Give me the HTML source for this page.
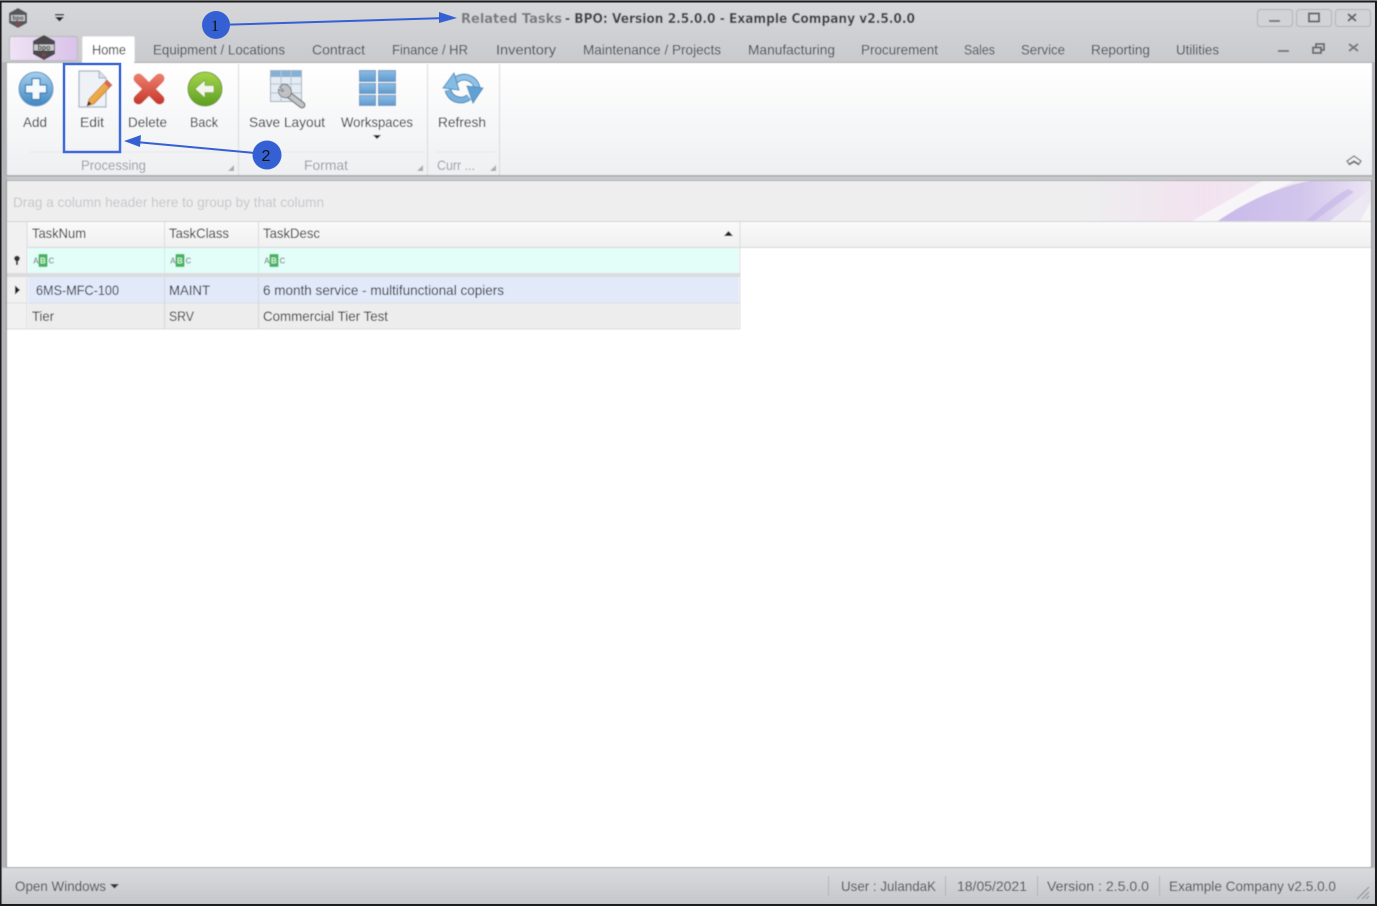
<!DOCTYPE html>
<html><head><meta charset="utf-8"><title>Related Tasks</title>
<style>
html,body{margin:0;padding:0;width:1377px;height:906px;overflow:hidden;background:#fff}
svg{display:block;position:absolute;left:0;top:0}
text{font-family:"Liberation Sans",sans-serif;font-size:14px;fill:#3a3f4a}
.t{fill:#464b56}
.g{fill:#9b9da2}
.k{fill:#262a32}
.sm{font-size:8px;font-weight:bold}
</style></head><body>
<svg width="1377" height="906" viewBox="0 0 1377 906" xmlns="http://www.w3.org/2000/svg">
<defs>
<linearGradient id="top" x1="0" y1="0" x2="0" y2="1"><stop offset="0" stop-color="#d6d7da"/><stop offset="1" stop-color="#c9cacd"/></linearGradient>
<linearGradient id="rib" x1="0" y1="0" x2="0" y2="1"><stop offset="0" stop-color="#ffffff"/><stop offset="1" stop-color="#eff0f2"/></linearGradient>
<linearGradient id="hdr" x1="0" y1="0" x2="0" y2="1"><stop offset="0" stop-color="#fafafa"/><stop offset="1" stop-color="#f0f0f0"/></linearGradient>
<linearGradient id="stat" x1="0" y1="0" x2="0" y2="1"><stop offset="0" stop-color="#d9dade"/><stop offset="1" stop-color="#c6c7cb"/></linearGradient>
<linearGradient id="blue" x1="0" y1="0" x2="0" y2="1"><stop offset="0" stop-color="#a5d0ee"/><stop offset="1" stop-color="#3f87c2"/></linearGradient>
<linearGradient id="green" x1="0" y1="0" x2="0" y2="1"><stop offset="0" stop-color="#a6d64a"/><stop offset="1" stop-color="#5c9e22"/></linearGradient>
<linearGradient id="red" gradientUnits="userSpaceOnUse" x1="0" y1="73" x2="0" y2="105"><stop offset="0" stop-color="#ef8270"/><stop offset="1" stop-color="#c4352a"/></linearGradient>
<linearGradient id="pur" gradientUnits="userSpaceOnUse" x1="7" y1="0" x2="1371" y2="0"><stop offset="0" stop-color="#eeeeef"/><stop offset=".79" stop-color="#eeeeef"/><stop offset=".88" stop-color="#f3e2f0"/><stop offset=".95" stop-color="#eeebf3"/><stop offset="1" stop-color="#ece8f3"/></linearGradient>
<linearGradient id="lil" gradientUnits="userSpaceOnUse" x1="1220" y1="0" x2="1371" y2="0"><stop offset="0" stop-color="#c9baea"/><stop offset=".55" stop-color="#d2c6ec"/><stop offset="1" stop-color="#ebe5f3"/></linearGradient>
<linearGradient id="logo" x1="0" y1="0" x2="1" y2="0"><stop offset="0" stop-color="#efe3f5"/><stop offset="1" stop-color="#d9c2e8"/></linearGradient>
<linearGradient id="pen" x1="0" y1="0" x2="1" y2="1"><stop offset="0" stop-color="#f8c76a"/><stop offset="1" stop-color="#dd8a22"/></linearGradient>
<linearGradient id="ws" x1="0" y1="0" x2="0" y2="1"><stop offset="0" stop-color="#8dbce3"/><stop offset="1" stop-color="#5f9ad0"/></linearGradient>
<filter id="soft" x="-5%" y="-5%" width="110%" height="110%"><feGaussianBlur stdDeviation="0.45"/></filter>
</defs>
<g filter="url(#soft)">
<!-- frame -->
<rect width="1377" height="906" fill="#b4b5b8"/>
<rect x="2" y="2" width="1373" height="60" fill="url(#top)"/>
<!-- title -->
<path d="M18 8l9 5v10l-9 5-9-5V13z" fill="#56575b"/>
<rect x="11" y="15" width="14" height="6" fill="#c4c4c6"/>
<text x="18" y="20" text-anchor="middle" style="font-size:6px;font-weight:bold;fill:#333">bpo</text>
<circle cx="18" cy="24.500" r="1.500" fill="#a04040"/>
<rect x="55" y="14" width="9" height="1.500" fill="#222"/>
<path d="M55 17h9l-4.500 4.500z" fill="#222"/>
<text x="461" y="23" textLength="101" lengthAdjust="spacingAndGlyphs" style="font-family:'DejaVu Sans',sans-serif;font-weight:bold;font-size:13px;fill:#777a80">Related Tasks</text>
<text x="565" y="23" textLength="350" lengthAdjust="spacingAndGlyphs" style="font-family:'DejaVu Sans',sans-serif;font-weight:bold;font-size:13px;fill:#3c3f46">- BPO: Version 2.5.0.0 - Example Company v2.5.0.0</text>
<!-- window buttons -->
<g fill="#d2d3d6" stroke="#b2b3b7"><rect x="1257.500" y="9.500" width="35" height="17" rx="3"/><rect x="1296.500" y="9.500" width="35" height="17" rx="3"/><rect x="1335.500" y="9.500" width="35" height="17" rx="3"/></g>
<rect x="1269" y="20" width="11" height="2" fill="#777"/>
<rect x="1309" y="13.500" width="10" height="8" fill="none" stroke="#666" stroke-width="2"/>
<path d="M1348 14l8 7M1356 14l-8 7" stroke="#666" stroke-width="2"/>
<!-- tab row -->
<rect x="9.500" y="36.500" width="68" height="24" rx="2" fill="url(#logo)" stroke="#b9b9be"/>
<path d="M44 35l11 6v13l-11 6-11-6V41z" fill="#48494d"/>
<rect x="34" y="44.500" width="20" height="6" fill="#c8c8ca"/>
<text x="44" y="50" text-anchor="middle" style="font-size:7px;font-weight:bold;fill:#333">bpo</text>
<circle cx="44" cy="55" r="1.800" fill="#93403f"/>
<path d="M82 62V38q0-2 2-2h49q2 0 2 2v24z" fill="#fff" stroke="#d4d5d8"/>
<text x="92" y="54.500" textLength="34" lengthAdjust="spacingAndGlyphs" class="k">Home</text>
<g class="t">
<text class="t" x="153" y="54.500" textLength="132" lengthAdjust="spacingAndGlyphs">Equipment / Locations</text>
<text class="t" x="312" y="54.500" textLength="53" lengthAdjust="spacingAndGlyphs">Contract</text>
<text class="t" x="392" y="54.500" textLength="76" lengthAdjust="spacingAndGlyphs">Finance / HR</text>
<text class="t" x="496" y="54.500" textLength="60" lengthAdjust="spacingAndGlyphs">Inventory</text>
<text class="t" x="583" y="54.500" textLength="138" lengthAdjust="spacingAndGlyphs">Maintenance / Projects</text>
<text class="t" x="748" y="54.500" textLength="87" lengthAdjust="spacingAndGlyphs">Manufacturing</text>
<text class="t" x="861" y="54.500" textLength="77" lengthAdjust="spacingAndGlyphs">Procurement</text>
<text class="t" x="964" y="54.500" textLength="31" lengthAdjust="spacingAndGlyphs">Sales</text>
<text class="t" x="1021" y="54.500" textLength="44" lengthAdjust="spacingAndGlyphs">Service</text>
<text class="t" x="1091" y="54.500" textLength="59" lengthAdjust="spacingAndGlyphs">Reporting</text>
<text class="t" x="1176" y="54.500" textLength="43" lengthAdjust="spacingAndGlyphs">Utilities</text>
</g>
<rect x="1278" y="50" width="11" height="2" fill="#777"/>
<rect x="1316" y="44" width="8" height="6" fill="none" stroke="#666" stroke-width="1.800"/>
<rect x="1313" y="47.500" width="8" height="5.500" fill="#c9cacd" stroke="#666" stroke-width="1.800"/>
<path d="M1349 44l9 7M1358 44l-9 7" stroke="#777" stroke-width="2"/>
<!-- ribbon -->
<rect x="6.500" y="62.500" width="1366" height="113" fill="url(#rib)" stroke="#aaabae"/>
<rect x="82" y="61" width="52" height="2" fill="#fff"/>
<rect x="7" y="177" width="1365" height="3" fill="#c9cacd"/>
<path d="M238.500 64v111M427.500 64v111M499.500 64v111" stroke="#d8d9dc"/>
<path d="M30 152h200M245 152h180M435 152h60" stroke="#e6e7e9"/>
<!-- add -->
<circle cx="36" cy="89" r="17" fill="url(#blue)" stroke="#5b93c0"/>
<path d="M32 78.500h8V85h6.500v8H40v6.500h-8V93h-6.500v-8H32z" fill="#f4f9fd" stroke="#3d7bb0" stroke-width="1.200" stroke-linejoin="round"/>
<text x="23" y="127" textLength="24" lengthAdjust="spacingAndGlyphs" class="k">Add</text>
<!-- edit -->
<path d="M79 71h20l7 7v29H79z" fill="#eef1f6" stroke="#a7b3c6" stroke-width="1.200"/>
<path d="M99 71v7h7" fill="#d8dee8" stroke="#a7b3c6"/>
<path d="M107 80l5 5-18 19-7 2 2-7z" fill="url(#pen)" stroke="#ae7120" stroke-width=".6"/>
<path d="M107 80l5 5-3 3-5-5z" fill="#d4685c"/>
<path d="M87 106l1.500-5 3 3z" fill="#333"/>
<text x="80" y="127" textLength="24" lengthAdjust="spacingAndGlyphs" class="k">Edit</text>
<!-- delete -->
<path d="M138.500 78.500L159.500 99.500M159.500 78.500L138.500 99.500" stroke="url(#red)" stroke-width="10" stroke-linecap="round" fill="none"/>
<text x="128" y="127" textLength="39" lengthAdjust="spacingAndGlyphs" class="k">Delete</text>
<!-- back -->
<circle cx="205" cy="89" r="17" fill="url(#green)" stroke="#6f9a30"/>
<path d="M195 89l10-9v5.500h9v7h-9V98z" fill="#f2f6ea" stroke="#6b9a30" stroke-width=".6"/>
<text x="190" y="127" textLength="28" lengthAdjust="spacingAndGlyphs" class="k">Back</text>
<!-- save layout -->
<rect x="270.500" y="70.500" width="31" height="31" fill="#e4ebf2" stroke="#9fb0c0"/>
<rect x="271" y="71" width="30" height="6" fill="#86b0d6"/>
<path d="M281 71v30M291 71v30M271 84h30M271 93h30" stroke="#b5c5d4"/>
<path d="M289 95l13 10" stroke="#77797e" stroke-width="7" stroke-linecap="round"/>
<path d="M289 95l13 10" stroke="#c3c5c9" stroke-width="4.500" stroke-linecap="round"/>
<path d="M283 84l-3.500 3 4 3.500-1 1-4-2.500c-.5 3 .5 6 3 7.500 3 1.800 6 1.500 8 0 2-2 2.500-5 1-8-1.500-3-4.500-4.500-7.500-4.500z" fill="#bfc1c5" stroke="#6f7176" stroke-width=".9"/>
<text x="249" y="127" textLength="76" lengthAdjust="spacingAndGlyphs" class="k">Save Layout</text>
<!-- workspaces -->
<g fill="url(#ws)" stroke="#6a98c0"><rect x="359.500" y="70.500" width="16" height="11"/><rect x="378.500" y="70.500" width="17" height="11"/><rect x="359.500" y="83.500" width="16" height="10"/><rect x="378.500" y="83.500" width="17" height="10"/><rect x="359.500" y="95.500" width="16" height="10"/><rect x="378.500" y="95.500" width="17" height="10"/></g>
<text x="341" y="127" textLength="72" lengthAdjust="spacingAndGlyphs" class="k">Workspaces</text>
<path d="M373 135h8l-4 4z" fill="#222"/>
<!-- refresh -->
<path d="M455 81a13 13 0 0 1 22 7" fill="none" stroke="#4f8dbd" stroke-width="7"/>
<path d="M455 81a13 13 0 0 1 22 7" fill="none" stroke="#8fc2e6" stroke-width="4.800"/>
<path d="M469 97a13 13 0 0 1-21-7" fill="none" stroke="#4f8dbd" stroke-width="7"/>
<path d="M469 97a13 13 0 0 1-21-7" fill="none" stroke="#78b2dd" stroke-width="4.800"/>
<path d="M443 88l11-15 5 17z" fill="#84bce2" stroke="#4f8dbd"/>
<path d="M483 88l-10 15-6-17z" fill="#5fa1d4" stroke="#4f8dbd"/>
<text x="438" y="127" textLength="48" lengthAdjust="spacingAndGlyphs" class="k">Refresh</text>
<!-- group labels -->
<text class="g" x="81" y="170" textLength="65" lengthAdjust="spacingAndGlyphs">Processing</text>
<text class="g" x="304" y="170" textLength="44" lengthAdjust="spacingAndGlyphs">Format</text>
<text class="g" x="437" y="170" textLength="38" lengthAdjust="spacingAndGlyphs">Curr ...</text>
<path d="M234 165v6h-6zM423 165v6h-6zM496 165v6h-6z" fill="#aaacb0"/>
<path d="M1347 161l7-5 7 5-2 3-5-3-5 3zM1349 165l5-3 5 3" fill="none" stroke="#777" stroke-width="1.300"/>
<!-- grid panel -->
<rect x="7" y="180" width="1364" height="688" fill="#fff"/>
<rect x="7" y="180" width="1364" height="1" fill="#a9aaad"/>
<rect x="6" y="180" width="1" height="688" fill="#8f9094"/>
<rect x="1371" y="180" width="1" height="688" fill="#8f9094"/>
<rect x="7" y="181" width="1364" height="40" fill="url(#pur)"/>
<path d="M1192 221L1262 181h32l-76 40z" fill="#f7f5f7"/>
<path d="M1218 221c26-18 58-34 92-40h61v8l-41 32z" fill="url(#lil)"/>
<path d="M1306 221c16-14 30-26 42-32l6 3-40 29z" fill="#bfaee6" opacity=".55"/>
<path d="M1360 221l11-20v20z" fill="#f6f5f7"/>
<text x="13" y="207" textLength="311" lengthAdjust="spacingAndGlyphs" style="fill:#c6c7ca">Drag a column header here to group by that column</text>
<rect x="7" y="221" width="1364" height="1" fill="#d2d3d5"/>
<rect x="7" y="222" width="1364" height="25" fill="url(#hdr)"/>
<rect x="7" y="247" width="1364" height="1" fill="#d6d7d9"/>
<rect x="7" y="222" width="20" height="107" fill="#f1f1f2"/>
<path d="M27 222v107" stroke="#dcdcde"/>
<path d="M164.500 222v107M258.500 222v107M740 222v107" stroke="#dcdcde"/>
<text x="32" y="238" textLength="54" lengthAdjust="spacingAndGlyphs" class="k">TaskNum</text>
<text x="169" y="238" textLength="60" lengthAdjust="spacingAndGlyphs" class="k">TaskClass</text>
<text x="263" y="238" textLength="57" lengthAdjust="spacingAndGlyphs" class="k">TaskDesc</text>
<path d="M724 236l4.500-5 4.500 5z" fill="#222"/>
<!-- filter row -->
<rect x="28" y="248" width="711" height="25" fill="#e3fef9"/>
<path d="M164.500 248v25M258.500 248v25" stroke="#d6e8e6"/>
<rect x="7" y="273" width="733" height="4" fill="#dcdcde"/>
<circle cx="17" cy="258.500" r="2.800" fill="#333"/>
<path d="M16 260h2v5h-2z" fill="#333"/>
<rect x="38.500" y="254" width="9" height="13" rx="1" fill="#45b560"/>
<rect x="175.500" y="254" width="9" height="13" rx="1" fill="#45b560"/>
<rect x="269.500" y="254" width="9" height="13" rx="1" fill="#45b560"/>
<text class="sm" x="33" y="263.500" style="fill:#8f9696">A</text><text class="sm" x="40" y="263.500" style="fill:#d8f0dc">B</text><text class="sm" x="48.500" y="263.500" style="fill:#8f9696">C</text>
<text class="sm" x="170" y="263.500" style="fill:#8f9696">A</text><text class="sm" x="177" y="263.500" style="fill:#d8f0dc">B</text><text class="sm" x="185.500" y="263.500" style="fill:#8f9696">C</text>
<text class="sm" x="264" y="263.500" style="fill:#8f9696">A</text><text class="sm" x="271" y="263.500" style="fill:#d8f0dc">B</text><text class="sm" x="279.500" y="263.500" style="fill:#8f9696">C</text>
<!-- rows -->
<rect x="28" y="277" width="711" height="26" fill="#e2eafa"/>
<rect x="28" y="303" width="711" height="26" fill="#ededed"/>
<path d="M28 303h712M7 303h20M7 329h733" stroke="#dcdcde"/>
<path d="M164.500 277v52M258.500 277v52" stroke="#d6d7da"/>
<path d="M15 285.500l5 4.500-5 4.500z" fill="#222"/>
<text x="36" y="295" textLength="83" lengthAdjust="spacingAndGlyphs" class="k">6MS-MFC-100</text>
<text x="169" y="295" textLength="41" lengthAdjust="spacingAndGlyphs" class="k">MAINT</text>
<text x="263" y="295" textLength="241" lengthAdjust="spacingAndGlyphs" class="k">6 month service - multifunctional copiers</text>
<text x="32" y="321" textLength="22" lengthAdjust="spacingAndGlyphs" class="k">Tier</text>
<text x="169" y="321" textLength="25" lengthAdjust="spacingAndGlyphs" class="k">SRV</text>
<text x="263" y="321" textLength="125" lengthAdjust="spacingAndGlyphs" class="k">Commercial Tier Test</text>
<!-- status -->
<rect x="6" y="867" width="1366" height="1" fill="#a3a4a8"/>
<rect x="2" y="868" width="1373" height="36" fill="url(#stat)"/>
<text x="15" y="891" textLength="91" lengthAdjust="spacingAndGlyphs" class="t">Open Windows</text>
<path d="M110 884h9l-4.500 4.500z" fill="#333"/>
<path d="M828.500 876v20M945.500 876v20M1037.500 876v20M1159.500 876v20" stroke="#b3b4b8"/>
<text x="841" y="891" textLength="95" lengthAdjust="spacingAndGlyphs" class="t">User : JulandaK</text>
<text x="957" y="891" textLength="70" lengthAdjust="spacingAndGlyphs" class="t">18/05/2021</text>
<text x="1047" y="891" textLength="102" lengthAdjust="spacingAndGlyphs" class="t">Version : 2.5.0.0</text>
<text x="1169" y="891" textLength="167" lengthAdjust="spacingAndGlyphs" class="t">Example Company v2.5.0.0</text>
<path d="M1357 899l12-12M1362 899l7-7M1366 899l3-3" stroke="#8f9094" stroke-width="1.200"/>
</g>
<!-- outer border -->
<path d="M.5 906V1.500H1376V905H0" fill="none" stroke="#1c1c1e" stroke-width="2"/>
<!-- annotations -->
<rect x="64" y="64" width="56" height="88" fill="none" stroke="#3f6ad8" stroke-width="2.500"/>
<path d="M216 25L446 18" stroke="#3560d4" stroke-width="2"/>
<path d="M457 18l-18-6v11z" fill="#3560d4"/>
<path d="M266 154L136 142" stroke="#3560d4" stroke-width="2"/>
<path d="M124 141l17-6-1 12z" fill="#3560d4"/>
<circle cx="216" cy="25" r="14" fill="#3560d4"/>
<circle cx="267" cy="155" r="14.500" fill="#3560d4"/>
<text x="215" y="31" text-anchor="middle" style="font-family:'Liberation Serif',serif;font-size:16px;fill:#111">1</text>
<text x="266" y="161" text-anchor="middle" style="font-family:'Liberation Sans',sans-serif;font-size:16px;fill:#111">2</text>
</svg>
</body></html>
